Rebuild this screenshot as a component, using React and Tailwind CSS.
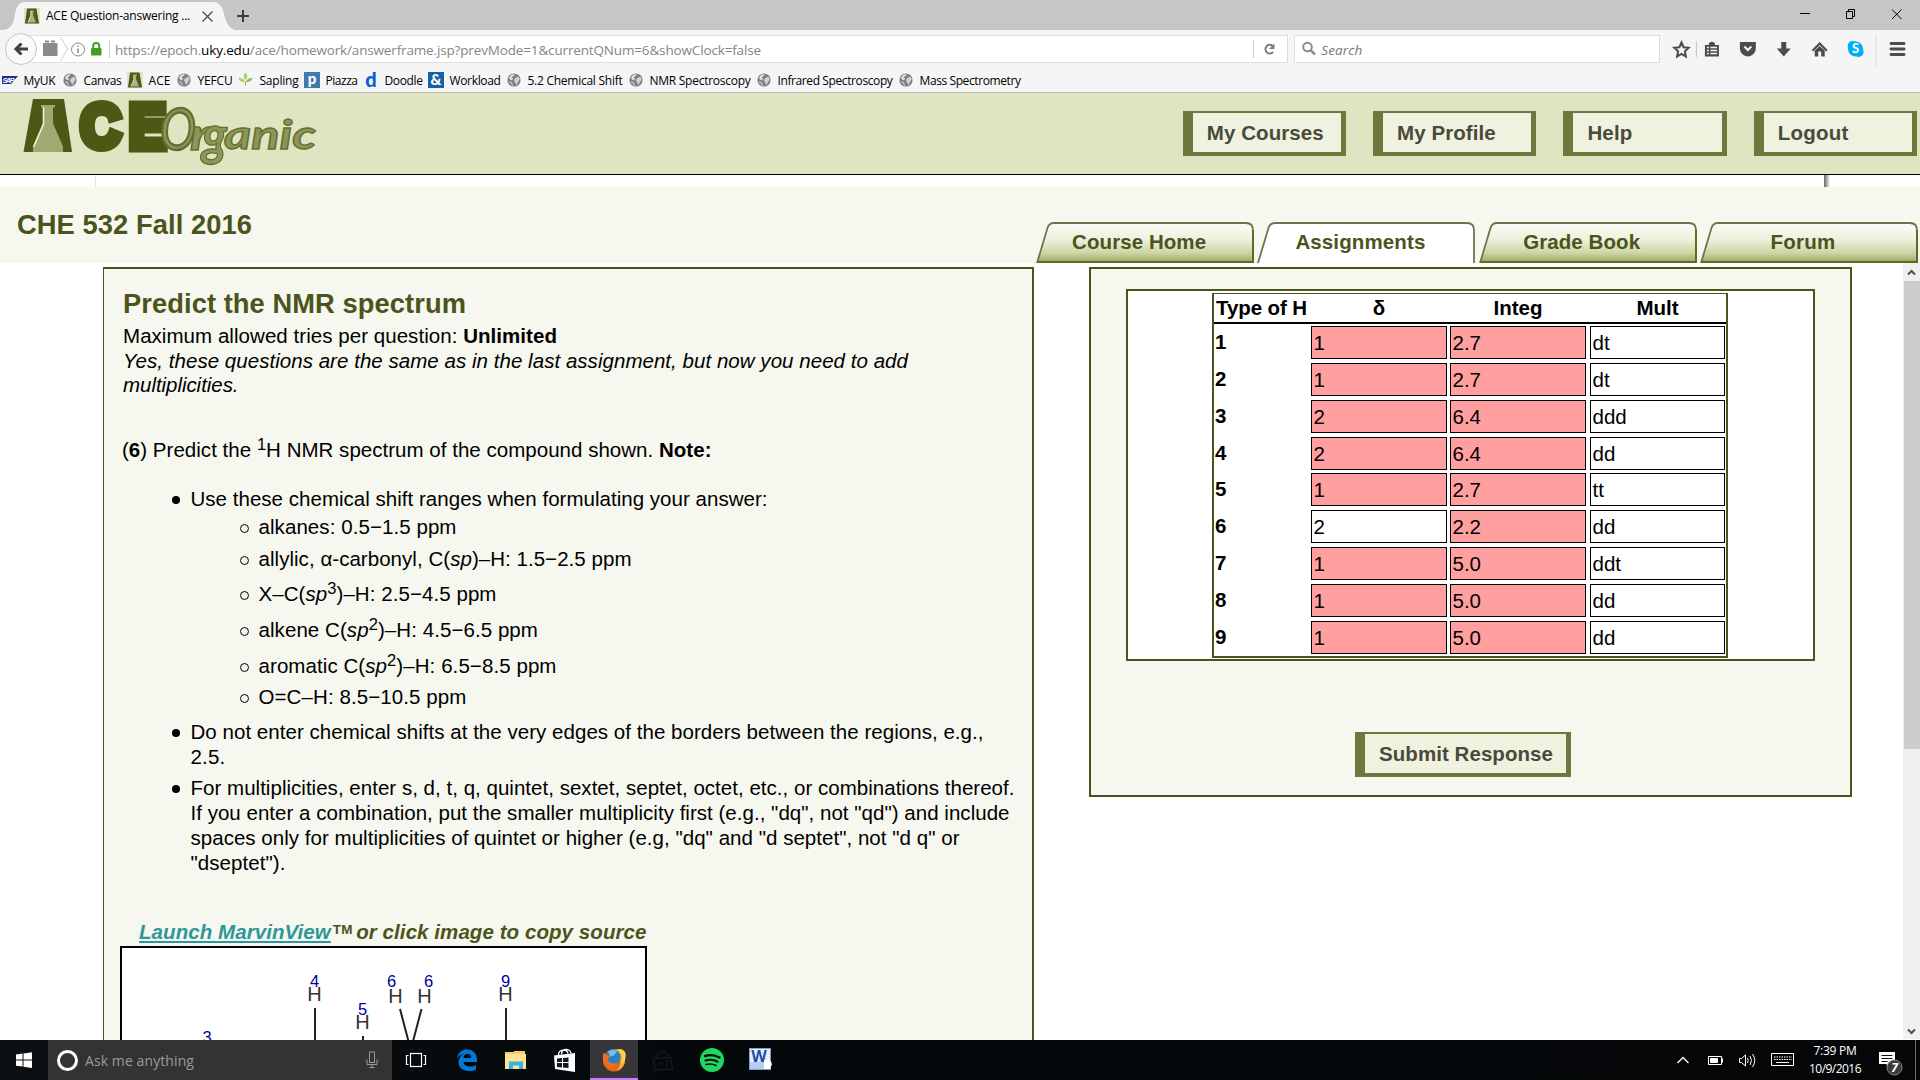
import React, { useLayoutEffect, useRef, useState } from "react";

const UI = "font-['Open_Sans','Noto_Sans',sans-serif]";

/* Inline text that is tracked so that it fills a given width. */
function Fit({ w, className = "", children }) {
  const ref = useRef(null);
  const [ls, setLs] = useState(0);
  useLayoutEffect(() => {
    const el = ref.current;
    const n = el.textContent.length;
    if (n > 1) setLs((w - el.getBoundingClientRect().width) / n);
  }, [w]);
  return (
    <span ref={ref} className={"inline-block whitespace-pre " + className} style={{ letterSpacing: ls }}>
      {children}
    </span>
  );
}

function Flask({ size = 16 }) {
  return (
    <svg width={size} height={size} viewBox="0 0 16 16">
      <rect width="16" height="16" fill="#dfe5c1" />
      <path d="M3 0.5h9.5L15 15.5H1z" fill="#4f5a1a" />
      <path d="M6 2.5h4v1h-.8v4L12 14.5H4L6.8 7.5v-4H6z" fill="#aab27e" />
      <path d="M6.8 3.5v4L4 14.5" stroke="#eef0dc" strokeWidth=".8" fill="none" />
    </svg>
  );
}

function Globe() {
  return (
    <svg width="16" height="16" viewBox="0 0 16 16">
      <circle cx="8" cy="8" r="6.6" fill="#808080" />
      <path d="M3 5.500C4.500 3 6 2.300 8 2.200c1 .8.3 1.500-.7 1.800L5.500 5.500 7 6.500l-1 2L4 7.500z" fill="#f2f2f2" opacity=".85" />
      <path d="M9.500 6l3-1.500 1.200 3L12 10l-1.500 3-1.500-2.500L7.800 8z" fill="#e3e3e3" opacity=".8" />
      <path d="M3 10l2.500.5 1 3" stroke="#ddd" strokeWidth="1" fill="none" />
    </svg>
  );
}

function SapIcon() {
  return (
    <svg width="16" height="16" viewBox="0 0 16 16">
      <path d="M0 4h16l-7 8H0z" fill="#1c2f8c" />
      <text x="0.500" y="10.500" fontSize="7.500" fontWeight="bold" fontStyle="italic" fill="#fff" fontFamily="Liberation Sans" textLength="12">SAP</text>
    </svg>
  );
}

function Leaf() {
  return (
    <svg width="16" height="16" viewBox="0 0 16 16" fill="#a9d36c">
      <path d="M7.500 0.500C10 3 10 5.500 7.500 8 5 5.500 5 3 7.500.5z" />
      <path d="M0.500 6c3.500-.5 5.500 1 6.500 4-3.500.5-5.500-1-6.500-4z" />
      <path d="M14.500 6c-3.500-.5-5.500 1-6.500 4 3.500.5 5.500-1 6.500-4z" fill="#8cc152" />
      <path d="M7.500 9v5" stroke="#d9a25a" strokeWidth="1" />
    </svg>
  );
}

function LetterIcon({ t, box, color, size, y = 13 }) {
  return (
    <svg width="16" height="16" viewBox="0 0 16 16">
      <rect width="16" height="16" fill={box} />
      <text x="8" y={y} fontSize={size} fontWeight="900" fill={color} textAnchor="middle" fontFamily="Lato">{t}</text>
    </svg>
  );
}

const bookmarks = [
  { t: "MyUK", w: 32, slot: "w-[60px]", icon: <SapIcon /> },
  { t: "Canvas", w: 38, slot: "w-[65px]", icon: <Globe /> },
  { t: "ACE", w: 22, slot: "w-[49px]", icon: <Flask /> },
  { t: "YEFCU", w: 35, slot: "w-[62px]", icon: <Globe /> },
  { t: "Sapling", w: 39, slot: "w-[66px]", icon: <Leaf /> },
  { t: "Piazza", w: 32, slot: "w-[59px]", icon: <LetterIcon t="p" box="#3e7aab" color="#fff" size="15" y={11.500} /> },
  { t: "Doodle", w: 38, slot: "w-[65px]", icon: <LetterIcon t="d" box="#f5f5f5" color="#0a5fd9" size="20" y={15} /> },
  { t: "Workload", w: 51, slot: "w-[78px]", icon: <LetterIcon t="&" box="#1562a5" color="#fff" size="15" /> },
  { t: "5.2 Chemical Shift", w: 95, slot: "w-[122px]", icon: <Globe /> },
  { t: "NMR Spectroscopy", w: 101, slot: "w-[128px]", icon: <Globe /> },
  { t: "Infrared Spectroscopy", w: 115, slot: "w-[142px]", icon: <Globe /> },
  { t: "Mass Spectrometry", w: 101, slot: "w-[130px]", icon: <Globe /> },
];

function TabStrip() {
  return (
    <div className="flex h-[30px] shrink-0 justify-between bg-[#c6c6c6]">
      <div className="flex">
        <div className="relative h-[30px] w-[234px]">
          <svg className="absolute inset-0" width="234" height="30">
            <path d="M0 30C12 30 13 24 15 14 17 5 19 2 26 2H212C219 2 222 5 224 14 227 25 229 30 240 30z" fill="#f5f5f5" />
          </svg>
          <div className="relative flex h-[32px] items-center pl-[24px]">
            <Flask />
            <span className={UI + " ml-[6px] w-[156px] text-[12px] text-black"}>
              <Fit w={144}>ACE Question-answering ...</Fit>
            </span>
            <svg width="11" height="11" viewBox="0 0 11 11" stroke="#4c4c4c" strokeWidth="1.300"><path d="M.5.5l10 10M10.500.5l-10 10" /></svg>
          </div>
        </div>
        <svg className="mt-[9px] ml-[2px]" width="14" height="14" viewBox="0 0 14 14" stroke="#3c3c3c" strokeWidth="2"><path d="M7 1v12M1 7h12" /></svg>
      </div>
      <svg width="140" height="30" viewBox="0 0 140 30" fill="none" stroke="#000" strokeWidth="1">
        <path d="M20 13.500h10" />
        <path d="M66.500 11.500h6v7h-6zM68.500 11.500v-2h6v7h-2" />
        <path d="M112 9.500l9.500 9.500M121.500 9.500l-9.500 9.500" />
      </svg>
    </div>
  );
}

function NavBar() {
  return (
    <div className="flex h-[38px] shrink-0 bg-[#f5f5f5] pt-[5px]">
      <svg className="relative z-10 -mt-[3px] ml-[4px]" width="34" height="34" viewBox="0 0 34 34">
        <circle cx="17" cy="17" r="15.500" fill="#f9f9f9" stroke="#c4c4c4" />
        <path d="M17.500 11.500L12 17l5.500 5.500M12.500 17H24" stroke="#404040" strokeWidth="3" fill="none" />
      </svg>
      <div className="-ml-[12px] flex h-[28px] w-[1265px] items-center border border-[#dedede] bg-white">
        <svg width="84" height="26" viewBox="0 0 84 26">
          <rect x="16" y="7" width="14.500" height="13" fill="#8a8a8a" /><path d="M18 5.500h4M24 5.500h4" stroke="#8a8a8a" strokeWidth="2" />
          <path d="M33.500 1l7 12-7 12" stroke="#cfcfcf" fill="none" />
          <circle cx="51" cy="13.500" r="6.500" stroke="#8a8a8a" fill="none" />
          <path d="M51 12.500v4.500M51 9.500v1.500" stroke="#8a8a8a" strokeWidth="1.500" />
          <rect x="64" y="12" width="10.500" height="7.500" rx="1" fill="#4a9a28" />
          <path d="M66.200 13v-3a3 3 0 016 0v3" stroke="#4a9a28" strokeWidth="2" fill="none" />
          <path d="M82.500 4v18" stroke="#d0d0d0" />
        </svg>
        <span className={UI + " mt-[2px] ml-[4px] flex-1 text-[13.500px] text-[#858585]"}>
          <Fit w={646}>
            https://epoch.<span className="text-black">uky.edu</span>/ace/homework/answerframe.jsp?prevMode=1&amp;currentQNum=6&amp;showClock=false
          </Fit>
        </span>
        <svg width="34" height="26" viewBox="0 0 34 26" fill="none">
          <path d="M.5 4v18" stroke="#d0d0d0" />
          <path d="M19.500 9.800A4.300 4.300 0 1020 16" stroke="#7a7a7a" strokeWidth="2" />
          <path d="M21.500 7.500V13H16z" fill="#7a7a7a" />
        </svg>
      </div>
      <div className="ml-[6px] flex h-[28px] w-[366px] items-center border border-[#dedede] bg-white">
        <svg className="ml-[6px]" width="16" height="16" viewBox="0 0 16 16" fill="none" stroke="#8e8e8e"><circle cx="6.500" cy="6" r="4.300" strokeWidth="2" /><path d="M9.500 9l4.500 4.500" strokeWidth="2.500" /></svg>
        <span className={UI + " mt-[2px] ml-[4px] text-[13.500px] text-[#757575] italic"}><Fit w={41}>Search</Fit></span>
      </div>
      <svg className="ml-[11px]" width="250" height="33" viewBox="0 0 250 33">
        <g fill="none" stroke="#4c4c4c">
          <path d="M10.500 7.500l2.100 4.700 5.100.6-3.800 3.500 1 5.200-4.400-2.600-4.400 2.600 1-5.200-3.800-3.500 5.100-.6z" strokeWidth="2" />
          <path d="M25.500 6v16" stroke="#c6c6c6" />
        </g>
        <path d="M34 10h4V8l3-1.500 3 1.500v2h4v11.500h-14z" fill="#4c4c4c" />
        <path d="M36 12.500h2M39.500 12.500h6.500M36 15.500h2M39.500 15.500h6.500M36 18.500h2M39.500 18.500h6.500" stroke="#f5f5f5" strokeWidth="1.600" />
        <path d="M69 7h16v6c0 5-4 8.500-8 8.500s-8-3.500-8-8.500z" fill="#4c4c4c" />
        <path d="M73.500 11.500l3.500 3.500 3.500-3.500" stroke="#f5f5f5" strokeWidth="2" fill="none" />
        <path d="M110.500 7h5v6.500h4.500l-7 8-7-8h4.500z" fill="#4c4c4c" />
        <path d="M141 15l8-8 8 8-1.500 1.500L149 10 142.500 16.500z" fill="#4c4c4c" />
        <path d="M144 15.500l5-4.500 5 4.500v6h-3.500v-5h-3v5H144z" fill="#4c4c4c" />
        <circle cx="182" cy="11" r="5" fill="#00aff0" /><circle cx="188" cy="17" r="5" fill="#00aff0" /><circle cx="185" cy="14" r="7.600" fill="#00aff0" />
        <text x="185" y="18.500" fontSize="13" fontWeight="bold" fill="#fff" textAnchor="middle" fontFamily="Lato">S</text>
        <path d="M205.500 0v32" stroke="#dcdcdc" />
        <path d="M220.500 8.500h13M220.500 14h13M220.500 19.500h13" stroke="#4c4c4c" strokeWidth="3" strokeLinecap="round" />
      </svg>
    </div>
  );
}

function Bookmarks() {
  return (
    <div className="flex h-[25px] shrink-0 items-center border-b border-[#b9b9b9] bg-[#f5f5f5] pl-[2px]">
      {bookmarks.map((b) => (
        <div key={b.t} className={"flex items-center " + b.slot}>
          {b.icon}
          <span className={UI + " mt-[2px] ml-[5.500px] text-[12px] leading-[18px] text-black"}><Fit w={b.w}>{b.t}</Fit></span>
        </div>
      ))}
    </div>
  );
}

function Logo() {
  return (
    <svg className="ml-[20px]" width="310" height="81" viewBox="20 93 310 81">
      <path d="M33 99H64L72 152H23.500z" fill="#4c5914" />
      <path d="M41 105h14v2.500h-2v16l10 23v5.500H33v-5.500l10-23v-16h-2z" fill="#a0a971" />
      <path d="M43.500 107v17l-10 23" stroke="#eef0dc" strokeWidth="1.600" fill="none" />
      <g fontFamily="Liberation Sans" fontWeight="bold" fill="#4c5914" stroke="#4c5914" strokeWidth="9">
        <text x="80.500" y="147" fontSize="61" textLength="40" lengthAdjust="spacingAndGlyphs">C</text>
        <text x="129" y="147.500" fontSize="63" textLength="37" lengthAdjust="spacingAndGlyphs">E</text>
      </g>
      <g fontFamily="Lato" fontStyle="italic" fill="#8b9658" stroke="#656f33" strokeWidth="1.300">
        <text x="160" y="150" fontSize="58" textLength="36" lengthAdjust="spacingAndGlyphs" strokeWidth="2.500">O</text>
        <text x="190" y="150" fontSize="44" fontWeight="bold" textLength="20" lengthAdjust="spacingAndGlyphs">r</text>
        <text x="202" y="155" fontSize="56" fontWeight="bold" textLength="25" lengthAdjust="spacingAndGlyphs">g</text>
        <text x="224" y="149" fontSize="41" fontWeight="bold" textLength="92" lengthAdjust="spacingAndGlyphs">anic</text>
      </g>
    </svg>
  );
}

const box = "border-t-2 border-r-[5px] border-b-4 border-l-[10px] border-[#6e773c] bg-[#eff2df] font-bold text-[#4a4a3c]";

function SiteHeader() {
  const items = [["My Courses", 117], ["My Profile", 98.500], ["Help", 45], ["Logout", 71]];
  return (
    <div className="flex h-[82px] shrink-0 items-start justify-between border-b border-black bg-[#dfe5c1]">
      <Logo />
      <div className="mt-[18px] mr-[3px] flex gap-[27px]">
        {items.map(([t, w]) => (
          <div key={t} className={"flex h-[45px] w-[163.300px] items-center pt-[2px] pl-[14px] " + box}>
            <Fit w={w}>{t}</Fit>
          </div>
        ))}
      </div>
    </div>
  );
}

function Tab({ label, w, active }) {
  return (
    <div className="relative h-[41px] w-[218px]">
      <svg className="absolute inset-0" width="218" height="41" viewBox="0 0 218 41">
        <defs>
          <linearGradient id="tabFill" x1="0" y1="0" x2="0" y2="1">
            <stop offset="0" stopColor="#fafbf4" />
            <stop offset=".4" stopColor="#eef1df" />
            <stop offset=".75" stopColor="#cdd5a4" />
            <stop offset="1" stopColor="#98a35c" />
          </linearGradient>
        </defs>
        <path d="M1 41L11.500 6C12.500 2.500 14 1 18 1H210c5 0 7 2 7 7V41z" fill={active ? "#ffffff" : "url(#tabFill)"} />
        <path d="M1 41L11.500 6C12.500 2.500 14 1 18 1H210c5 0 7 2 7 7V41" fill="none" stroke="#6b7550" strokeWidth="1.800" />
        {!active && <path d="M1 40H217V8" fill="none" stroke="#5f6b22" strokeWidth="2" />}
      </svg>
      <div className="relative flex h-[41px] items-center justify-center pr-[12px] font-bold text-[#4b541c]">
        <Fit w={w}>{label}</Fit>
      </div>
    </div>
  );
}

function CourseBar() {
  return (
    <>
      <div className="flex h-[12px] shrink-0 bg-white">
        <div className="w-[96px] border-r border-[#e4e4e4]" />
        <div className="ml-[1728px] w-[6px] bg-linear-to-r from-[#666] to-white" />
      </div>
      <div className="flex h-[76px] shrink-0 items-end justify-between bg-[#f6f7ee] pr-[2px]">
        <div className="mb-[22px] ml-[17px] text-[27.300px] leading-[32px] font-bold text-[#4b541c]"><Fit w={235}>CHE 532 Fall 2016</Fit></div>
        <div className="flex gap-[3.300px]">
          <Tab label="Course Home" w={134} />
          <Tab label="Assignments" w={130} active />
          <Tab label="Grade Book" w={117} />
          <Tab label="Forum" w={65} />
        </div>
      </div>
    </>
  );
}

function Sup({ children }) {
  return <sup className="-top-[7px] text-[16.500px] not-italic">{children}</sup>;
}

function Line({ w, className = "", children }) {
  return <div className={"h-[25px] leading-[25px] " + className}><Fit w={w}>{children}</Fit></div>;
}

function Dot() {
  return <div className="mt-[10px] mr-[10.500px] h-[8px] w-[8px] shrink-0 rounded-full bg-black" />;
}

function Range({ w, className, children }) {
  return (
    <div className={"flex " + className}>
      <div className="mt-[9.500px] mr-[9.500px] h-[9px] w-[9px] shrink-0 rounded-full border border-black" />
      <Line w={w}>{children}</Line>
    </div>
  );
}

function Molecule() {
  return (
    <div className="ml-[16px] h-[100px] w-[527px] shrink-0 border-2 border-black bg-white">
      <svg width="523" height="98" viewBox="122 948 523 98" fontFamily="Liberation Sans" textAnchor="middle">
        <g fill="#333" fontSize="20">
          <text x="314.500" y="1000.500">H</text>
          <text x="362.500" y="1028.500">H</text>
          <text x="395.500" y="1002.500">H</text>
          <text x="424.500" y="1002.500">H</text>
          <text x="505.500" y="1000.500">H</text>
        </g>
        <g fill="#00009c" fontSize="16.500">
          <text x="314.500" y="986.500">4</text>
          <text x="362.500" y="1014.500">5</text>
          <text x="391.500" y="986.500">6</text>
          <text x="428.500" y="986.500">6</text>
          <text x="505.500" y="986.500">9</text>
          <text x="207" y="1042.500">3</text>
        </g>
        <path d="M315 1008v40M506 1008v40M363 1036v12M400 1009l10 38M421.500 1009l-10 38" stroke="#222" strokeWidth="2" fill="none" />
      </svg>
    </div>
  );
}

function Question() {
  return (
    <div className="ml-[103px] flex h-[780px] w-[931px] shrink-0 flex-col border-t-2 border-r-2 border-l border-[#4b541c] bg-[#f6f7ee]">
      <div className="mt-[19px] ml-[19px] h-[32px] text-[27.300px] leading-[32px] font-bold text-[#4b541c]"><Fit w={343}>Predict the NMR spectrum</Fit></div>
      <div className="ml-[19px]">
        <Line w={434} className="mt-[3px]">Maximum allowed tries per question: <b>Unlimited</b></Line>
        <Line w={785} className="italic">Yes, these questions are the same as in the last assignment, but now you need to add</Line>
        <Line w={115.500} className="-mt-px italic">multiplicities.</Line>
      </div>
      <Line w={589.500} className="mt-[40px] ml-[18px]">(<b>6</b>) Predict the <Sup>1</Sup>H NMR spectrum of the compound shown. <b>Note:</b></Line>
      <div className="mt-[24px] ml-[68px]">
        <div className="flex"><Dot /><Line w={577}>Use these chemical shift ranges when formulating your answer:</Line></div>
        <div className="ml-[68px]">
          <Range w={198} className="mt-[3px]">alkanes: 0.5−1.5 ppm</Range>
          <Range w={373} className="mt-[7px]">allylic, α-carbonyl, C(<i>sp</i>)–H: 1.5−2.5 ppm</Range>
          <Range w={238} className="mt-[10px]">X–C(<i>sp</i><Sup>3</Sup>)–H: 2.5−4.5 ppm</Range>
          <Range w={279.500} className="mt-[11px]">alkene C(<i>sp</i><Sup>2</Sup>)–H: 4.5−6.5 ppm</Range>
          <Range w={298} className="mt-[11px]">aromatic C(<i>sp</i><Sup>2</Sup>)–H: 6.5−8.5 ppm</Range>
          <Range w={208} className="mt-[6px]">O=C–H: 8.5−10.5 ppm</Range>
        </div>
        <div className="mt-[10px] flex">
          <Dot />
          <div>
            <Line w={793}>Do not enter chemical shifts at the very edges of the borders between the regions, e.g.,</Line>
            <Line w={35}>2.5.</Line>
          </div>
        </div>
        <div className="mt-[6px] flex">
          <Dot />
          <div>
            <Line w={824}>For multiplicities, enter s, d, t, q, quintet, sextet, septet, octet, etc., or combinations thereof.</Line>
            <Line w={819}>If you enter a combination, put the smaller multiplicity first (e.g., "dq", not "qd") and include</Line>
            <Line w={769}>spaces only for multiplicities of quintet or higher (e.g, "dq" and "d septet", not "d q" or</Line>
            <Line w={95}>"dseptet").</Line>
          </div>
        </div>
      </div>
      <Line w={507.500} className="mt-[44px] mb-[2px] ml-[35px] font-bold text-[#4b541c] italic">
        <span className="text-[#2c989c] underline decoration-2 underline-offset-2">Launch MarvinView</span><span className="relative left-[2px] -top-[5px] text-[13.500px] leading-none not-italic">TM</span> or click image to copy source
      </Line>
      <Molecule />
    </div>
  );
}

const rows = [
  ["1", "2.7", "dt"], ["1", "2.7", "dt"], ["2", "6.4", "ddd"], ["2", "6.4", "dd"], ["1", "2.7", "tt"],
  ["2", "2.2", "dd"], ["1", "5.0", "ddt"], ["1", "5.0", "dd"], ["1", "5.0", "dd"],
];

function Cell({ children, bad, className }) {
  return (
    <div className={"h-[33px] border border-black pl-[2px] leading-[32px] " + (bad ? "bg-[#ff9f9f] " : "bg-white ") + className}>
      {children}
    </div>
  );
}

function Answers() {
  return (
    <div className="ml-[55px] flex h-[530px] w-[763px] shrink-0 flex-col items-center border-2 border-[#4b541c] bg-[#f6f7ee]">
      <div className="mt-[20px] flex h-[372px] w-[689px] justify-center border-2 border-[#4b541c] bg-white">
        <div className="mt-[2px] mr-px h-[365px] w-[516px] border-t border-r-2 border-b-2 border-l-2 border-[#4b541c]">
          <div className="flex h-[30px] border-b-2 border-black leading-[28px] font-bold">
            <div className="w-[97px] pl-[2px]"><Fit w={91}>Type of H</Fit></div>
            <div className="w-[136px] text-center">δ</div>
            <div className="w-[142px] text-center">Integ</div>
            <div className="w-[137px] text-center">Mult</div>
          </div>
          <div className="mt-[2px] flex flex-col gap-[3.850px]">
            {rows.map((r, i) => (
              <div key={i} className="flex h-[33px]">
                <div className="w-[96.500px] pl-px leading-[32px] font-bold">{i + 1}</div>
                <Cell bad={i !== 5} className="w-[136px]">{r[0]}</Cell>
                <Cell bad className="ml-[3px] w-[136px]">{r[1]}</Cell>
                <Cell className="ml-[4px] w-[135.500px]">{r[2]}</Cell>
              </div>
            ))}
          </div>
        </div>
      </div>
      <div className={"mt-[71px] mr-[15px] flex h-[45px] w-[216px] items-center pt-[2px] pl-[14px] " + box}><Fit w={174}>Submit Response</Fit></div>
    </div>
  );
}

function Scrollbar() {
  return (
    <div className="ml-auto flex h-[776px] w-[17px] shrink-0 flex-col items-center bg-[#f0f0f0]">
      <svg width="17" height="18" viewBox="0 0 17 18"><path d="M5 11.500l3.500-3.500L12 11.500" stroke="#505050" strokeWidth="2" fill="none" /></svg>
      <div className="h-[468px] w-[16px] bg-[#cdcdcd]" />
      <svg className="mt-auto" width="17" height="17" viewBox="0 0 17 17"><path d="M5 7.500l3.500 3.500L12 7.500" stroke="#505050" strokeWidth="2" fill="none" /></svg>
    </div>
  );
}

function Apps() {
  return (
    <>
      <svg width="48" height="40" viewBox="0 0 48 40" fill="none" stroke="#fff" strokeWidth="1.200">
        <rect x="18.500" y="13.500" width="11" height="13" /><path d="M16.500 15.500h-2v9h2M31.500 15.500h2v9h-2" />
      </svg>
      <svg className="ml-[3px]" width="48" height="40" viewBox="0 0 48 40">
        <path d="M14 19C15 12 19 9.500 24 9.500c6.500 0 10 4.500 10 10.500v2H20.500c.3 3 3 4.500 6.500 4.500 2.500 0 4.500-.6 6-1.600v4.600c-2 1.100-4.500 1.500-7 1.500-6.500 0-10.500-3.500-10.500-9 0-3.500 2-6.500 5-8-3.500.7-5.500 2.500-6.500 5zm6.500-1h7.800c0-2.700-1.200-4.300-3.700-4.300-2.300 0-3.800 1.800-4.100 4.300z" fill="#0078d7" />
      </svg>
      <svg width="48" height="40" viewBox="0 0 48 40">
        <path d="M14 12h9v-1h11v18H14z" fill="#f5cf66" /><path d="M14 14h21v15H14z" fill="#fde391" />
        <path d="M18 29v-7.500h14V29h-4v-3.500h-6V29z" fill="#35b2e8" />
      </svg>
      <svg className="ml-px" width="48" height="40" viewBox="0 0 48 40">
        <path d="M14 15.500L35 13V32L15 29z" fill="#fff" />
        <path d="M18.500 15c0-6 8.500-6.500 9.500-1.500M21.500 14.500c0-7 9-6 9.500-1" stroke="#fff" strokeWidth="1.300" fill="none" />
        <path d="M17 18.500l5-.5v4h-5zM23 18l5.500-.6V22H23zM17 23h5v4.500l-5-.6zM23 23h5.500v5l-5.500-.5z" fill="#111820" />
      </svg>
      <svg className="ml-[2px] bg-[#37373a]" width="48" height="40" viewBox="0 0 48 40">
        <circle cx="24" cy="20.500" r="11" fill="#e8661b" />
        <path d="M19 11c5-3.500 13-1.500 15.500 5 2 7-2 13-8 14.500 5-4 5.500-11 1-15z" fill="#f9b63c" />
        <circle cx="23" cy="17" r="7.800" fill="#2f7fc4" />
        <path d="M18 11.500c3-2 7-2 9 0l-3 4-4 1z" fill="#74c0ea" />
        <path d="M26 10c6 2 8 8 4 15 5-3 7-8 5-13-2-3-5-4-9-2z" fill="#ffcf48" />
        <path d="M13.500 12.500l3 2.500 4 .5c-1 2-3 2.500-3 4.500 3 4 7 4 10 2.500-3 5-9 6-13 1.500-2-3.500-2-8-1-11.500z" fill="#ec7023" />
        <rect y="38" width="48" height="2" fill="#c77dff" />
      </svg>
      <svg width="48" height="40" viewBox="0 0 48 40" fill="none" stroke="#16181a" strokeWidth="1.500">
        <path d="M15 19l17-2 3 12-18 1zM18 18c0-7 10-8 12-2M20 24h6M29 20v6" />
      </svg>
      <svg width="49" height="40" viewBox="0 0 49 40" fill="none" stroke="#0b0e0d" strokeLinecap="round">
        <circle cx="26" cy="20" r="12" fill="#1ed760" stroke="none" />
        <path d="M19 16c5-1.500 10-1 14.500 1.500" strokeWidth="2.400" /><path d="M19.500 20.500c4.500-1.300 8.500-.8 12 1.200" strokeWidth="2" /><path d="M20 24.500c4-1 7-.6 10 1" strokeWidth="1.700" />
      </svg>
      <svg width="48" height="40" viewBox="0 0 48 40">
        <rect x="14.500" y="8.500" width="21" height="21" fill="#e9effa" stroke="#7f9fd4" />
        <path d="M15 22h15v7H15z" fill="#b9cdf0" />
        <text x="24" y="22" fontSize="16" fontWeight="bold" fill="#1c4fa8" textAnchor="middle" fontFamily="Open Sans">W</text>
        <path d="M29 20h6l2 4-2 5h-6z" fill="#fff" />
      </svg>
    </>
  );
}

function Taskbar() {
  return (
    <div className={"flex h-[40px] shrink-0 items-center justify-between bg-linear-to-r from-[#0b0f11] via-[#040709] to-[#040608] text-white " + UI}>
      <div className="flex h-full items-center">
        <svg width="48" height="40" viewBox="0 0 48 40" fill="#fff">
          <path d="M16 14.500l6.500-.9v6H16zM23.500 13.400l8.500-1.200v7.400h-8.500zM16 20.600h6.500v6L16 25.700zM23.500 20.600H32V28l-8.500-1.200z" />
        </svg>
        <div className="flex h-full w-[344px] items-center bg-[#333333]">
          <div className="ml-[9px] h-[21px] w-[21px] rounded-full border-[3px] border-white" />
          <span className="ml-[7px] flex-1 text-[14px] text-[#9b9b9b]"><Fit w={109}>Ask me anything</Fit></span>
          <svg className="mr-[14px]" width="12" height="18" viewBox="0 0 12 18" fill="none" stroke="#9b9b9b"><rect x="3.500" y="1" width="5" height="10.500" /><path d="M1 8.500v5h10v-5M6 13.500V16M3.500 16.500h5" /></svg>
        </div>
        <Apps />
      </div>
      <div className="flex h-full items-center">
        <svg width="130" height="40" viewBox="1670 1040 130 40" fill="none" stroke="#fff">
          <path d="M1677.500 1063l5.500-5.500 5.500 5.500" strokeWidth="1.400" />
          <path d="M1708.500 1056.500h13v8h-13z" /><path d="M1710.500 1058.500h7v4h-7z" fill="#fff" /><path d="M1722.500 1058.500v4" />
          <path d="M1739.500 1058.500h2l4-3.500v11l-4-3.500h-2zM1747.500 1058q1.500 2.500 0 5M1750 1056q3 4.500 0 9M1752.500 1054q4.500 6.500 0 13" />
          <path d="M1771.500 1053.500h22v12h-22z" />
          <path d="M1774 1057h18M1774 1059.500h18" strokeDasharray="1.500 1" /><path d="M1776 1062.500h13" />
        </svg>
        <div className="flex w-[70px] flex-col items-center text-[12px] leading-[18px]">
          <Fit w={43}>7:39 PM</Fit>
          <Fit w={52}>10/9/2016</Fit>
        </div>
        <svg width="50" height="40" viewBox="1870 1040 50 40">
          <path d="M1879 1052h16v12h-6v3l-3-3h-7z" fill="#fff" />
          <path d="M1881.500 1055.500h11M1881.500 1058.500h11M1881.500 1061.500h6" stroke="#111" />
          <circle cx="1894.500" cy="1067.500" r="7.500" fill="#3a3a3a" stroke="#8a8a8a" />
          <text x="1894.500" y="1071.500" fontSize="12" fontStyle="italic" fontWeight="bold" fill="#fff" textAnchor="middle" fontFamily="Open Sans">7</text>
          <path d="M1915.500 1040v40" stroke="#6a6f74" />
        </svg>
      </div>
    </div>
  );
}

export default function App() {
  return (
    <div className="flex h-[1080px] w-[1920px] flex-col overflow-hidden bg-white font-['Liberation_Sans',Arial,sans-serif] text-[20.500px] text-black">
      <TabStrip />
      <NavBar />
      <Bookmarks />
      <SiteHeader />
      <CourseBar />
      <div className="flex min-h-0 flex-1 items-start overflow-hidden">
        <div className="flex pt-[4px]">
          <Question />
          <Answers />
        </div>
        <Scrollbar />
      </div>
      <Taskbar />
    </div>
  );
}
